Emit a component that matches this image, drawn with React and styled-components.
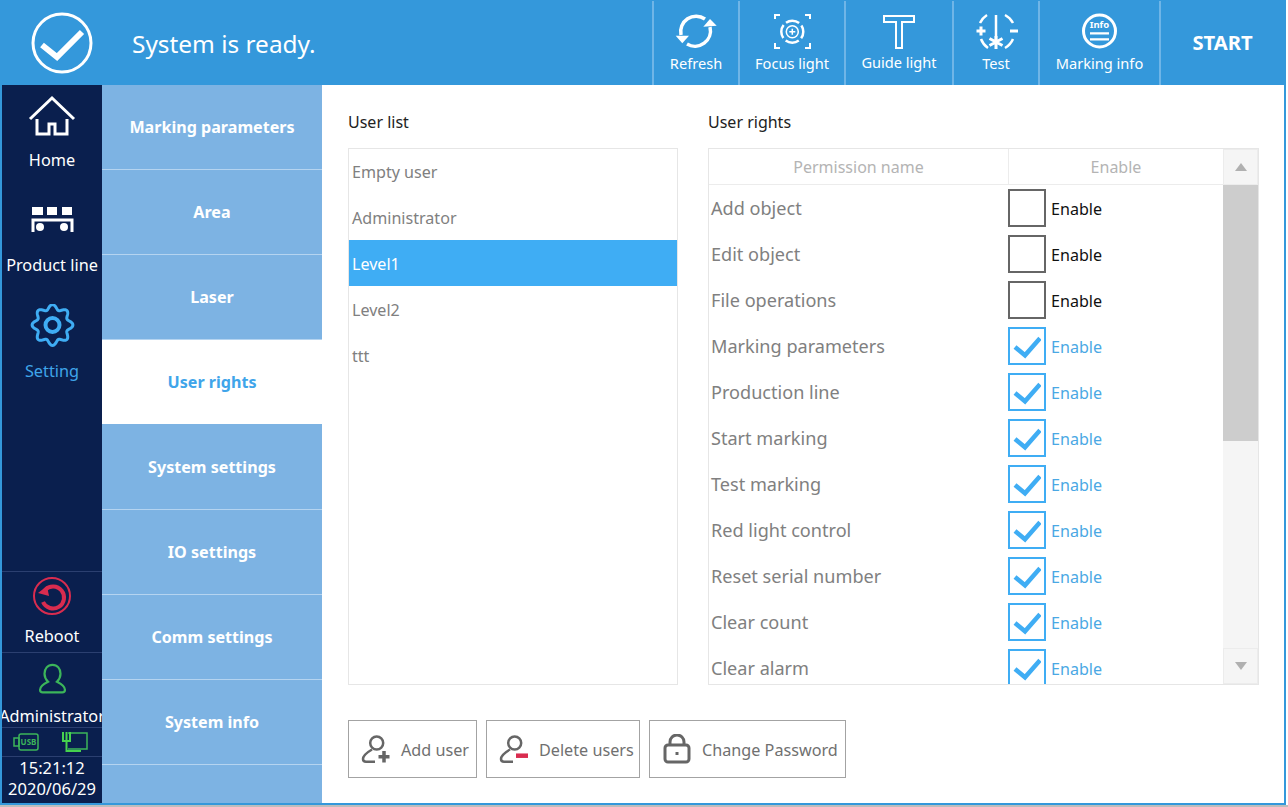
import React from "react";
import styled, { createGlobalStyle } from "styled-components";

const Global = createGlobalStyle`
  html, body { margin: 0; padding: 0; background: #fff; }
  * { box-sizing: border-box; }
`;

const Frame = styled.div`
  width: 1286px;
  height: 805px;
  border: 1px solid #3498db;
  border-left-width: 2px;
  border-right-width: 2px;
  border-bottom-width: 2px;
  background: #fff;
  display: flex;
  flex-direction: column;
  overflow: hidden;
  font-family: "Noto Sans", "Open Sans", sans-serif;
`;

const BottomStrip = styled.div`
  height: 2px;
  background: #bdbdbd;
`;

const TopBar = styled.header`
  height: 84px;
  flex: none;
  background: #3498db;
  display: flex;
  align-items: stretch;
  color: #fff;
`;

const Status = styled.div`
  flex: 1;
  display: flex;
  align-items: center;
  padding-left: 28px;
  gap: 38px;
  font-size: 24.4px;
  line-height: 1;
`;

const StatusText = styled.span`
  padding-top: 2px;
`;

const ToolButton = styled.div`
  width: ${(p) => p.$w}px;
  flex: none;
  border-left: 2px solid #6fb5e7;
  display: flex;
  flex-direction: column;
  align-items: center;
  padding-top: 9px;
  font-size: 14.6px;
  line-height: 20px;
  svg { display: block; height: 44px; width: 48px; }
`;

const ToolLabel = styled.span`
  margin-top: ${(p) => (p.$high ? -2 : -1)}px;
`;

const StartButton = styled.div`
  flex: none;
  width: 125px;
  border-left: 2px solid #6fb5e7;
  display: flex;
  align-items: center;
  justify-content: center;
  font-size: 20.2px;
  font-weight: 700;
  padding-bottom: 3px;
`;

const Body = styled.div`
  flex: 1;
  min-height: 0;
  display: flex;
`;

const SideBar = styled.nav`
  width: 100px;
  flex: none;
  background: #0a1f4e;
  display: flex;
  flex-direction: column;
  color: #fff;
`;

const SideItem = styled.div`
  height: 105px;
  flex: none;
  display: flex;
  flex-direction: column;
  align-items: center;
  padding-top: 9px;
  font-size: 16.3px;
  line-height: 22px;
  white-space: nowrap;
  color: ${(p) => (p.$active ? "#3fa5ea" : "#fff")};
  svg { display: block; width: 48px; height: 46px; margin-bottom: ${(p) => (p.$active ? 10 : 9)}px; }
`;

const SideSpacer = styled.div`
  flex: 1;
`;

const SideBlock = styled.div`
  height: ${(p) => p.$h}px;
  flex: none;
  border-top: 1px solid #2b3f70;
  display: flex;
  flex-direction: column;
  align-items: center;
  font-size: 16.3px;
  line-height: 22px;
  padding-top: ${(p) => p.$top}px;
  white-space: nowrap;
  overflow: hidden;
  svg { display: block; flex: none; }
`;

const SideCaption = styled.span`
  margin-top: ${(p) => p.$gap}px;
`;

const PortRow = styled.div`
  height: 29px;
  flex: none;
  border-top: 1px solid #2b3f70;
  display: flex;
  align-items: center;
  justify-content: space-between;
  padding: 0 14px 0 11px;
`;

const Clock = styled.div`
  flex: none;
  height: 47px;
  border-top: 1px solid #2b3f70;
  text-align: center;
  font-size: 16.5px;
  line-height: 21px;
`;

const SubNav = styled.nav`
  width: 220px;
  flex: none;
  background: #7db3e3;
  display: flex;
  flex-direction: column;
`;

const SubItem = styled.div`
  height: 85px;
  flex: none;
  display: flex;
  align-items: center;
  justify-content: center;
  font-size: 16.1px;
  font-weight: 700;
  border-bottom: 1px solid ${(p) => (p.$active ? "#7db3e3" : "#b5d4f0")};
  background: ${(p) => (p.$active ? "#fff" : "transparent")};
  color: ${(p) => (p.$active ? "#3fa5ea" : "#fff")};
`;

const Content = styled.main`
  flex: 1;
  min-width: 0;
  padding: 26px 26px 0 26px;
  display: flex;
  flex-direction: column;
`;

const Columns = styled.div`
  display: flex;
  gap: 30px;
`;

const Section = styled.section`
  width: ${(p) => p.$w}px;
  flex: none;
`;

const SectionTitle = styled.div`
  height: 37px;
  font-size: 16px;
  line-height: 22px;
  color: #222;
`;

const UserList = styled.div`
  height: 537px;
  border: 1px solid #e6e6e6;
`;

const UserRow = styled.div`
  height: 46px;
  display: flex;
  align-items: center;
  padding: 2px 0 0 3px;
  font-size: 16.1px;
  background: ${(p) => (p.$selected ? "#3fadf4" : "transparent")};
  color: ${(p) => (p.$selected ? "#fff" : "#808080")};
  &:first-child { margin-top: -1px; }
`;

const TableBox = styled.div`
  height: 537px;
  border: 1px solid #e6e6e6;
  display: flex;
  overflow: hidden;
`;

const TableMain = styled.div`
  flex: 1;
  min-width: 0;
  overflow: hidden;
`;

const HeadRow = styled.div`
  height: 36px;
  display: grid;
  grid-template-columns: 299px 1fr;
  border-bottom: 1px solid #ececec;
  font-size: 16px;
  color: #b4b4b4;
`;

const HeadCell = styled.div`
  display: flex;
  align-items: center;
  justify-content: center;
  & + & { border-left: 1px solid #ececec; }
`;

const PermRow = styled.div`
  height: 46px;
  display: grid;
  grid-template-columns: 299px 1fr;
  align-items: center;
`;

const PermName = styled.div`
  padding-left: 2px;
  font-size: 18.1px;
  color: #808080;
`;

const EnableCell = styled.div`
  display: flex;
  align-items: center;
  gap: 5px;
  font-size: 16.1px;
  color: ${(p) => (p.$on ? "#4aa8e4" : "#111")};
`;

const EnableText = styled.span`
  padding-top: 2px;
`;

const CheckBox = styled.div`
  width: 38px;
  height: 38px;
  border: 2px solid ${(p) => (p.$on ? "#3fadf4" : "#666")};
  display: flex;
  align-items: center;
  justify-content: center;
  svg { display: block; }
`;

const ScrollBar = styled.div`
  width: 35px;
  flex: none;
  display: flex;
  flex-direction: column;
  background: #f5f5f5;
`;

const ScrollArrow = styled.div`
  height: 36px;
  flex: none;
  background: #f5f5f5;
  border: 1px solid #ececec;
  display: flex;
  align-items: center;
  justify-content: center;
  &::before {
    content: "";
    border-left: 6px solid transparent;
    border-right: 6px solid transparent;
    ${(p) => (p.$up ? "border-bottom" : "border-top")}: 8px solid #b0b0b0;
  }
`;

const ScrollThumb = styled.div`
  height: 256px;
  flex: none;
  background: #cdcdcd;
`;

const ScrollTrack = styled.div`
  flex: 1;
`;

const Actions = styled.div`
  display: flex;
  gap: 9px;
  margin-top: 35px;
`;

const ActionButton = styled.div`
  width: ${(p) => p.$w}px;
  height: 58px;
  flex: none;
  border: 1px solid #a3a3a3;
  display: flex;
  align-items: center;
  padding-left: 12px;
  gap: ${(p) => p.$gap}px;
  font-size: 16.2px;
  color: #707070;
  white-space: nowrap;
  svg { display: block; flex: none; }
`;

const ActionLabel = styled.span`
  padding-top: 2px;
`;

const RefreshIcon = () => (
  <svg viewBox="0 0 48 44" fill="none" stroke="#fff" strokeWidth="3.5">
    <path d="M9 25A15.500 15.500 0 0 1 33 9" />
    <path d="M38 17A15.500 15.500 0 0 1 15 34" />
    <path d="M31.300 16.700L44.700 15.700 38 9z" fill="#fff" stroke="none" />
    <path d="M3.700 25.700H17L10.300 33.300z" fill="#fff" stroke="none" />
  </svg>
);

const FocusIcon = () => (
  <svg viewBox="0 0 48 44" fill="none" stroke="#fff" strokeWidth="2">
    <path d="M7 9V5h5M37 5h5v4M7 33v5h5M37 38h5v-5" />
    <circle cx="24.300" cy="21.700" r="11" strokeWidth="2.500" strokeDasharray="14 3.280" strokeDashoffset="7" />
    <circle cx="24.300" cy="21.700" r="6" strokeWidth="1.500" />
    <path d="M24.300 18.700v6M21.300 21.700h6" strokeWidth="1.500" />
  </svg>
);

const GuideIcon = () => (
  <svg viewBox="0 0 48 44" fill="none" stroke="#fff" strokeWidth="2">
    <path d="M9 6h30v6H27v26h-6V12H9z" />
  </svg>
);

const TestIcon = () => (
  <svg viewBox="0 0 48 44" fill="none" stroke="#fff" strokeWidth="2.500">
    <path d="M24 5v27" />
    <path d="M15 5a19 19 0 0 0-7 8M33 5a19 19 0 0 1 8 8M9 29a19 19 0 0 0 7 9M33 38a19 19 0 0 0 8-9" />
    <path d="M4.500 21h9M9 16.500v9M38 21h8" strokeWidth="3" />
    <path d="M24 26v13M17.500 28.500l13 7M30.500 28.500l-13 7" strokeWidth="3" />
  </svg>
);

const InfoIcon = () => (
  <svg viewBox="0 0 48 44" fill="none" stroke="#fff" strokeWidth="3">
    <circle cx="23.500" cy="21" r="16" />
    <text x="23.500" y="17.500" textAnchor="middle" fontSize="9.500" fontWeight="700" fill="#fff" stroke="none" fontFamily="Noto Sans">Info</text>
    <path d="M14 23.300h19M14 29.300h19" strokeWidth="2.200" />
  </svg>
);

const HomeIcon = () => (
  <svg viewBox="0 0 48 46" fill="none" stroke="#fff" strokeWidth="3">
    <path d="M2 25L24 4l22 21" />
    <path d="M9 25v15h12V30h6v10h12V25" />
  </svg>
);

const LineIcon = () => (
  <svg viewBox="0 0 48 46" fill="#fff" stroke="none">
    <path d="M4 8h11v8H4zM19 8h10v8H19zM34 8h10v8H34z" />
    <path d="M5 33V21h39v12" fill="none" stroke="#fff" strokeWidth="3" />
    <circle cx="12" cy="28" r="4" />
    <circle cx="36" cy="28" r="4" />
  </svg>
);

// шестерёнка с волнистым краем
const gearPath = (() => {
  const cx = 24.500;
  const cy = 21;
  const pts = [];
  for (let i = 0; i <= 160; i++) {
    const a = (i / 160) * Math.PI * 2 - Math.PI / 8;
    const r = 18 + 2.4 * Math.cos(a * 8);
    pts.push(`${(cx + r * Math.cos(a)).toFixed(2)} ${(cy + r * Math.sin(a)).toFixed(2)}`);
  }
  return "M" + pts.join("L") + "z";
})();

const GearIcon = () => (
  <svg viewBox="0 0 48 46" fill="none" stroke="#3fadf4" strokeWidth="3">
    <path d={gearPath} />
    <circle cx="24.500" cy="21" r="7" strokeWidth="4" />
  </svg>
);

const RebootIcon = () => (
  <svg width="40" height="40" viewBox="0 0 40 40" fill="none" stroke="#d92c4f">
    <circle cx="20" cy="20" r="18" strokeWidth="2" />
    <path d="M13 14a11 11 0 1 1-2 12" strokeWidth="4" />
    <path d="M6 17l9-7 2 10z" fill="#d92c4f" stroke="none" />
  </svg>
);

const UserIcon = () => (
  <svg width="29" height="32" viewBox="0 0 32 36" fill="none" stroke="#3cb55a" strokeWidth="2.500">
    <path d="M16 2c5.500 0 9 4.500 9 10 0 4-2 7-4 9 4 2 9 5 9 9 0 2-1 3-3 3H5c-2 0-3-1-3-3 0-4 5-7 9-9-2-2-4-5-4-9 0-5.500 3.500-10 9-10z" />
  </svg>
);

const UsbIcon = () => (
  <svg width="26" height="18" viewBox="0 0 26 18" fill="none" stroke="#3cb55a" strokeWidth="1.500">
    <path d="M1 5h5v8H1z" />
    <rect x="6" y="1" width="19" height="16" rx="2" />
    <text x="15.500" y="12" textAnchor="middle" fontSize="8" fontWeight="700" fill="#3cb55a" stroke="none" fontFamily="Noto Sans">USB</text>
  </svg>
);

const NetIcon = () => (
  <svg width="26" height="22" viewBox="0 0 26 22" fill="none" stroke="#3cb55a" strokeWidth="1.500">
    <path d="M6 2h19v16H6" />
    <path d="M1 1v9h7V1M4.500 1v20M4 20h15" strokeWidth="2" stroke="#46d24e" />
  </svg>
);

const PersonOutline = () => (
  <>
    <circle cx="15.700" cy="10" r="6.500" />
    <path d="M11 16.500C5 20 2 23 2 26c0 2 1 2.700 3 2.700h9" />
  </>
);

const AddUserIcon = () => (
  <svg width="32" height="32" viewBox="0 0 32 32" fill="none" stroke="#666" strokeWidth="2.500">
    <PersonOutline />
    <path d="M23 18v11.500M17.500 23.700h11" strokeWidth="3.500" />
  </svg>
);

const DeleteUserIcon = () => (
  <svg width="32" height="32" viewBox="0 0 32 32" fill="none" stroke="#666" strokeWidth="2.500">
    <PersonOutline />
    <path d="M17 22.700h12" strokeWidth="4.500" stroke="#d92c4f" />
  </svg>
);

const LockIcon = () => (
  <svg width="30" height="30" viewBox="0 0 30 30" fill="none" stroke="#666" strokeWidth="3">
    <rect x="3" y="11" width="24" height="17" rx="3" />
    <path d="M8 11V8a7 7 0 0 1 14 0v3" />
    <path d="M15 18v3" />
  </svg>
);

const Check = () => (
  <svg width="28" height="28" viewBox="0 0 28 28" fill="none" stroke="#3fadf4" strokeWidth="4.500">
    <path d="M2 15l10 8.300L27 6.300" />
  </svg>
);

const subItems = ["Marking parameters", "Area", "Laser", "User rights", "System settings", "IO settings", "Comm settings", "System info"];
const users = ["Empty user", "Administrator", "Level1", "Level2", "ttt"];
const rights = [
  ["Add object", false],
  ["Edit object", false],
  ["File operations", false],
  ["Marking parameters", true],
  ["Production line", true],
  ["Start marking", true],
  ["Test marking", true],
  ["Red light control", true],
  ["Reset serial number", true],
  ["Clear count", true],
  ["Clear alarm", true],
];

export default function App() {
  return (
    <>
      <Global />
      <Frame>
        <TopBar>
          <Status>
            <svg width="64" height="64" viewBox="0 0 64 64" fill="none" stroke="#fff">
              <circle cx="32" cy="32" r="29" strokeWidth="3" />
              <path d="M12 34l15 12 25-25" strokeWidth="6" />
            </svg>
            <StatusText>System is ready.</StatusText>
          </Status>
          <ToolButton $w={86}><RefreshIcon /><ToolLabel>Refresh</ToolLabel></ToolButton>
          <ToolButton $w={106}><FocusIcon /><ToolLabel>Focus light</ToolLabel></ToolButton>
          <ToolButton $w={108}><GuideIcon /><ToolLabel $high>Guide light</ToolLabel></ToolButton>
          <ToolButton $w={86}><TestIcon /><ToolLabel>Test</ToolLabel></ToolButton>
          <ToolButton $w={121}><InfoIcon /><ToolLabel>Marking info</ToolLabel></ToolButton>
          <StartButton>START</StartButton>
        </TopBar>
        <Body>
          <SideBar>
            <SideItem><HomeIcon />Home</SideItem>
            <SideItem><LineIcon />Product line</SideItem>
            <SideItem $active><GearIcon />Setting</SideItem>
            <SideSpacer />
            <SideBlock $h={81} $top={4}><RebootIcon /><SideCaption $gap={9}>Reboot</SideCaption></SideBlock>
            <SideBlock $h={75} $top={10}><UserIcon /><SideCaption $gap={10}>Administrator</SideCaption></SideBlock>
            <PortRow><UsbIcon /><NetIcon /></PortRow>
            <Clock>15:21:12<br />2020/06/29</Clock>
          </SideBar>
          <SubNav>
            {subItems.map((s) => (
              <SubItem key={s} $active={s === "User rights"}>{s}</SubItem>
            ))}
          </SubNav>
          <Content>
            <Columns>
              <Section $w={330}>
                <SectionTitle>User list</SectionTitle>
                <UserList>
                  {users.map((u) => (
                    <UserRow key={u} $selected={u === "Level1"}>{u}</UserRow>
                  ))}
                </UserList>
              </Section>
              <Section $w={551}>
                <SectionTitle>User rights</SectionTitle>
                <TableBox>
                  <TableMain>
                    <HeadRow>
                      <HeadCell>Permission name</HeadCell>
                      <HeadCell>Enable</HeadCell>
                    </HeadRow>
                    {rights.map(([name, on]) => (
                      <PermRow key={name}>
                        <PermName>{name}</PermName>
                        <EnableCell $on={on}>
                          <CheckBox $on={on}>{on && <Check />}</CheckBox>
                          <EnableText>Enable</EnableText>
                        </EnableCell>
                      </PermRow>
                    ))}
                  </TableMain>
                  <ScrollBar>
                    <ScrollArrow $up />
                    <ScrollThumb />
                    <ScrollTrack />
                    <ScrollArrow />
                  </ScrollBar>
                </TableBox>
              </Section>
            </Columns>
            <Actions>
              <ActionButton $w={129} $gap={8}><AddUserIcon /><ActionLabel>Add user</ActionLabel></ActionButton>
              <ActionButton $w={154} $gap={8}><DeleteUserIcon /><ActionLabel>Delete users</ActionLabel></ActionButton>
              <ActionButton $w={197} $gap={10}><LockIcon /><ActionLabel>Change Password</ActionLabel></ActionButton>
            </Actions>
          </Content>
        </Body>
      </Frame>
      <BottomStrip />
    </>
  );
}
